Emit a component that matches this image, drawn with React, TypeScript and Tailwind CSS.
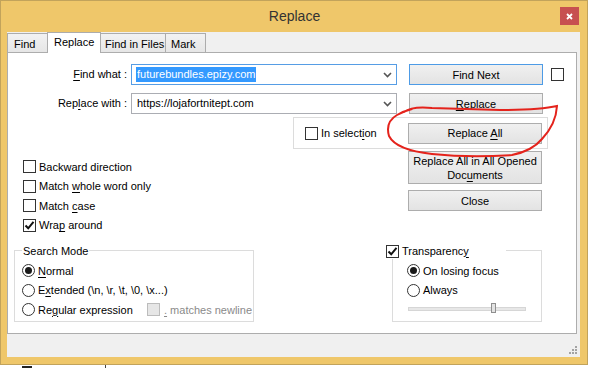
import type { ReactNode } from "react";

function CheckBox({ checked = false, disabled = false }: { checked?: boolean; disabled?: boolean }) {
  return (
    <div
      className={`w-[13px] h-[13px] shrink-0 border flex items-center justify-center ${
        disabled ? "border-[#bcbcbc] bg-[#e6e6e6]" : "border-[#333] bg-white"
      }`}
    >
      {checked && (
        <svg width="11" height="11" viewBox="0 0 11 11">
          <path d="M1.5 5.5 L4.2 8.3 L9.5 1.8" fill="none" stroke="#111" strokeWidth="2" />
        </svg>
      )}
    </div>
  );
}

function Radio({ checked = false }: { checked?: boolean }) {
  return (
    <div className="w-[13px] h-[13px] shrink-0 rounded-full border border-[#333] bg-white flex items-center justify-center">
      {checked && <div className="w-[7px] h-[7px] rounded-full bg-[#1a1a1a]" />}
    </div>
  );
}

function Button({ children, def = false, className = "" }: { children: ReactNode; def?: boolean; className?: string }) {
  return (
    <div
      className={`w-[134px] flex items-center justify-center text-center leading-[14px] border bg-gradient-to-b from-[#f0f0f0] to-[#e3e3e3] ${
        def ? "border-[#4d9be6]" : "border-[#adadad]"
      } ${className}`}
    >
      {children}
    </div>
  );
}

function Chevron() {
  return (
    <svg width="9" height="6" viewBox="0 0 9 6" className="mr-[4px] shrink-0">
      <path d="M1 1 L4.5 4.5 L8 1" fill="none" stroke="#555" strokeWidth="1.6" />
    </svg>
  );
}

function Row({ children }: { children: ReactNode }) {
  return <div className="h-[19.5px] flex items-center gap-[3px] whitespace-nowrap">{children}</div>;
}

export default function App() {
  return (
    <div className="w-[592px] h-[369px] bg-white relative overflow-hidden font-['Liberation_Sans',Arial,sans-serif] text-[11px] text-black">
      <div className="w-[588px] h-[365px] flex flex-col bg-[#efc76a] border border-[#c2a35b]">
        {/* title bar */}
        <div className="h-[31px] flex items-start shrink-0">
          <div className="flex-1" />
          <div className="w-[200px] h-[31px] flex items-center justify-center text-[14px] text-[#333] pl-[1px]">Replace</div>
          <div className="flex-1 flex justify-end">
            <div className="mt-[6px] mr-[8px] w-[19px] h-[18px] bg-[#c75050] flex items-center justify-center">
              <svg width="7" height="7" viewBox="0 0 7 7">
                <path d="M1 1 L6 6 M6 1 L1 6" stroke="#fff" strokeWidth="1.8" />
              </svg>
            </div>
          </div>
        </div>

        {/* client */}
        <div className="flex-1 ml-[6px] mr-[7px] mb-[7px] bg-[#f0f0f0] flex flex-col">
          {/* tabs */}
          <div className="h-[20px] flex items-end shrink-0 whitespace-nowrap">
            <div className="w-[41px] h-[19px] border border-b-0 border-[#acacac] bg-gradient-to-b from-[#f2f2f2] to-[#e6e6e6] flex items-center pl-[6px] pt-[2px]">Find</div>
            <div className="w-[54px] h-[21px] -ml-px -mb-px relative z-10 border border-b-0 border-[#acacac] bg-white flex items-center pl-[6px] pb-[2px]">Replace</div>
            <div className="w-[66px] h-[19px] -ml-px border border-b-0 border-[#acacac] bg-gradient-to-b from-[#f2f2f2] to-[#e6e6e6] flex items-center pl-[4px] pt-[2px]">Find in Files</div>
            <div className="w-[41px] h-[19px] -ml-px border border-b-0 border-[#acacac] bg-gradient-to-b from-[#f2f2f2] to-[#e6e6e6] flex items-center pl-[5px] pt-[2px]">Mark</div>
          </div>

          {/* panel */}
          <div className="w-[570px] h-[282px] shrink-0 border border-[#adadad] bg-white flex flex-col">
            {/* find what */}
            <div className="mt-[11px] h-[21px] flex items-center">
              <div className="w-[119px] text-right">
                <u className="underline-offset-2">F</u>ind what :
              </div>
              <div className="ml-[4px] w-[266px] h-[21px] border border-[#569de5] flex items-center justify-between">
                <span className="ml-[4px] px-[1px] bg-[#3399ff] text-white leading-[15px]">futurebundles.epizy.com</span>
                <Chevron />
              </div>
              <Button def className="ml-[12px] h-[21px]">Find Next</Button>
              <div className="ml-[8px]">
                <CheckBox />
              </div>
            </div>

            {/* replace with */}
            <div className="mt-[8px] h-[21px] flex items-center">
              <div className="w-[119px] text-right">
                Rep<u className="underline-offset-2">l</u>ace with :
              </div>
              <div className="ml-[4px] w-[266px] h-[21px] border border-[#abadb3] flex items-center justify-between">
                <span className="ml-[5px]">https://lojafortnitept.com</span>
                <Chevron />
              </div>
              <Button className="ml-[12px] h-[21px]">
                <span>
                  <u className="underline-offset-2">R</u>eplace
                </span>
              </Button>
            </div>

            {/* in selection group */}
            <div className="mt-[3px] ml-[285px] w-[255px] h-[32px] border border-[#dcdcdc] flex items-center">
              <div className="ml-[11px]">
                <CheckBox />
              </div>
              <span className="ml-[3px]">
                In select<u className="underline-offset-2">i</u>on
              </span>
              <Button className="ml-auto mr-[5px] h-[21px]">
                <span>
                  Replace <u className="underline-offset-2">A</u>ll
                </span>
              </Button>
            </div>

            {/* options + buttons */}
            <div className="h-[95px] flex">
              <div className="ml-[15px] w-[385px] pt-[8px] flex flex-col">
                <Row>
                  <CheckBox />
                  <span>Backward direction</span>
                </Row>
                <Row>
                  <CheckBox />
                  <span>
                    Match <u className="underline-offset-2">w</u>hole word only
                  </span>
                </Row>
                <Row>
                  <CheckBox />
                  <span>
                    Match <u className="underline-offset-2">c</u>ase
                  </span>
                </Row>
                <Row>
                  <CheckBox checked />
                  <span>
                    Wra<u className="underline-offset-2">p</u> around
                  </span>
                </Row>
              </div>
              <div className="pt-[2px] flex flex-col">
                <Button className="h-[33px]">
                  <span>
                    Replace All in All Opened
                    <br />
                    Doc<u className="underline-offset-2">u</u>ments
                  </span>
                </Button>
                <Button className="mt-[6px] h-[21px]">Close</Button>
              </div>
            </div>

            {/* bottom groups */}
            <div className="flex">
              <div className="ml-[6px] mt-[6px] w-[240px] h-[72px] border border-[#dcdcdc] flex flex-col">
                <div className="-mt-[8px] ml-[7px] px-[1px] w-fit h-[16px] leading-[16px] bg-white">Search Mode</div>
                <div className="ml-[7px] mt-[2px] flex flex-col">
                  <Row>
                    <Radio checked />
                    <span>
                      <u className="underline-offset-2">N</u>ormal
                    </span>
                  </Row>
                  <Row>
                    <Radio />
                    <span>
                      E<u className="underline-offset-2">x</u>tended (\n, \r, \t, \0, \x...)
                    </span>
                  </Row>
                  <Row>
                    <div className="w-[122px] flex items-center gap-[3px]">
                      <Radio />
                      <span>
                        Re<u className="underline-offset-2">g</u>ular expression
                      </span>
                    </div>
                    <CheckBox disabled />
                    <span className="ml-[1px] text-[#8a8a8a]">
                      <u className="underline-offset-2">.</u> matches newline
                    </span>
                  </Row>
                </div>
              </div>

              <div className="ml-[138px] mt-[6px] w-[150px] h-[72px] border border-[#dcdcdc] flex flex-col">
                <div className="-mt-[8px] -ml-[7px] w-[120px] h-[16px] bg-white flex items-center gap-[3px]">
                  <CheckBox checked />
                  <span>
                    Transparenc<u className="underline-offset-2">y</u>
                  </span>
                </div>
                <div className="ml-[14px] mt-[2px] flex flex-col">
                  <Row>
                    <Radio checked />
                    <span>On losing focus</span>
                  </Row>
                  <Row>
                    <Radio />
                    <span>Always</span>
                  </Row>
                </div>
                <div className="ml-[15px] mt-[7px] w-[118px] h-[4px] bg-[#e7e7e7] border border-[#d6d6d6] relative">
                  <div className="absolute left-[82px] -top-[5px] w-[5px] h-[10px] bg-[#e3e3e3] border border-[#8f8f8f]" />
                </div>
              </div>
            </div>
          </div>

          {/* bottom strip with grip */}
          <div className="flex-1 flex items-end justify-end pr-[2px] pb-[2px]">
            <svg width="9" height="9" viewBox="0 0 9 9">
              <g fill="#a3a3a3">
                <rect x="6" y="0" width="2" height="2" />
                <rect x="3" y="3" width="2" height="2" />
                <rect x="6" y="3" width="2" height="2" />
                <rect x="0" y="6" width="2" height="2" />
                <rect x="3" y="6" width="2" height="2" />
                <rect x="6" y="6" width="2" height="2" />
              </g>
            </svg>
          </div>
        </div>
      </div>

      {/* fragments below window */}
      <div className="h-[4px] flex items-start">
        <div className="ml-[22px] mt-[1px] w-[10px] h-[2px] bg-[#222]" />
        <div className="ml-[73px] w-[1px] h-[3px] bg-[#444]" />
      </div>

      {/* red hand annotation */}
      <svg className="absolute inset-0 pointer-events-none" width="592" height="369" viewBox="0 0 592 369">
        <path
          d="M404 112 Q412 106 432 108 L500 110 Q540 110 557 106 Q556 124 542 139 Q532 151 512 155 Q470 158 432 154 Q396 150 389 136 Q385 122 397 115 Q404 111 412 109"
          fill="none"
          stroke="#e4231c"
          strokeWidth="2"
          strokeLinecap="round"
        />
      </svg>
    </div>
  );
}
